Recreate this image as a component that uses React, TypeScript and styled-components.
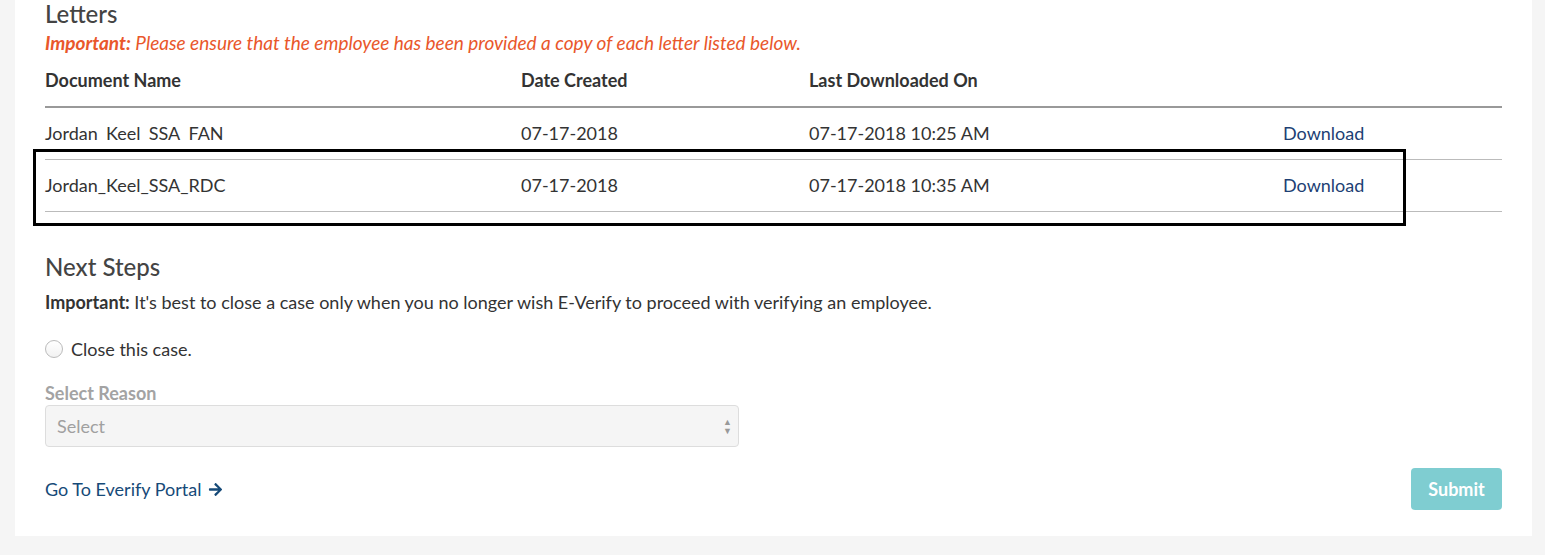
import React from "react";
import styled, { createGlobalStyle } from "styled-components";
import { FaArrowRight } from "react-icons/fa";

const GlobalStyle = createGlobalStyle`
  body {
    margin: 0;
    background-color: #f5f5f5;
    font-family: Lato, "Open Sans", sans-serif;
    color: #333;
  }
`;
const Card = styled.div`
  position: relative;
  margin: 0 13px 0 15px;
  padding: 0 30px 26px 30px;
  background-color: white;
`;
const Heading = styled.h2`
  margin: 0;
  font-size: 24px;
  font-weight: 500;
  line-height: 28px;
  color: #444;
`;
const Warning = styled.p`
  margin: 0;
  font-size: 19px;
  font-style: italic;
  line-height: 30px;
  color: #e9572b;
  b {
    font-weight: 700;
  }
`;
const Table = styled.div`
  display: flex;
  flex-direction: column;
`;
const Row = styled.div<{ head?: boolean }>`
  display: grid;
  grid-template-columns: 476px 288px 474px 1fr;
  align-items: center;
  box-sizing: border-box;
  height: ${(p) => (p.head ? "50px" : "52px")};
  padding-bottom: ${(p) => (p.head ? "4px" : "2px")};
  border-bottom: ${(p) => (p.head ? "2px solid #999" : "1px solid #bbb")};
  font-size: 18px;
  font-weight: ${(p) => (p.head ? 700 : 400)};
  color: #333;
`;
const DownloadLink = styled.a`
  color: #1d3f74;
  text-decoration: none;
  cursor: pointer;
`;
const Highlight = styled.div`
  position: absolute;
  left: 18px;
  top: 140px;
  width: 1373px;
  height: 86px;
  pointer-events: none;
  display: flex;
  flex-direction: column;
`;
const HighlightMask = styled.div`
  height: 9px;
  margin-left: 1px;
  background-color: white;
`;
const HighlightBox = styled.div`
  flex: 1;
  border: 3px solid black;
`;
const Section = styled.div`
  margin-top: 41px;
`;
const Note = styled.p`
  margin: 10px 0 0 0;
  font-size: 18px;
  line-height: 22px;
  color: #333;
  b {
    font-weight: 700;
  }
`;
const RadioRow = styled.label`
  display: flex;
  align-items: center;
  gap: 8px;
  margin-top: 25px;
  font-size: 18px;
  line-height: 22px;
  color: #333;
`;
const Radio = styled.span`
  width: 16px;
  height: 16px;
  border: 1px solid #bbb;
  border-radius: 50%;
  background: linear-gradient(#fff, #f2f2f2);
`;
const FieldLabel = styled.div`
  margin-top: 23px;
  font-size: 18px;
  font-weight: 700;
  line-height: 20px;
  color: #a3a3a3;
`;
const SelectBox = styled.div`
  margin-top: 2px;
  width: 694px;
  height: 42px;
  box-sizing: border-box;
  display: flex;
  align-items: center;
  justify-content: space-between;
  padding: 0 6px 0 11px;
  background-color: #f5f5f5;
  border: 1px solid #ddd;
  border-radius: 4px;
  font-size: 18px;
  color: #a0a0a0;
`;
const Spinner = styled.span`
  display: flex;
  flex-direction: column;
  gap: 2px;
  font-size: 9px;
  line-height: 7px;
  color: #999;
`;
const Footer = styled.div`
  margin-top: 21px;
  display: flex;
  justify-content: space-between;
  align-items: center;
`;
const PortalLink = styled.a`
  display: flex;
  align-items: center;
  gap: 7px;
  font-size: 18px;
  color: #164a78;
  text-decoration: none;
  cursor: pointer;
`;
const SubmitButton = styled.button`
  width: 91px;
  height: 42px;
  border: none;
  border-radius: 4px;
  background-color: #7fcdd1;
  color: white;
  font-family: Lato, sans-serif;
  font-size: 18px;
  font-weight: 700;
`;

const letters = [
  { name: "Jordan_Keel_SSA_FAN", created: "07-17-2018", downloaded: "07-17-2018 10:25 AM" },
  { name: "Jordan_Keel_SSA_RDC", created: "07-17-2018", downloaded: "07-17-2018 10:35 AM" },
];

const App = () => {
  return (
    <>
      <GlobalStyle />
      <Card>
        <Heading>Letters</Heading>
        <Warning>
          <b>Important:</b> Please ensure that the employee has been provided a copy of each letter listed below.
        </Warning>
        <Table>
          <Row head>
            <span>Document Name</span>
            <span>Date Created</span>
            <span>Last Downloaded On</span>
            <span />
          </Row>
          {letters.map((l) => (
            <Row key={l.name}>
              <span>{l.name}</span>
              <span>{l.created}</span>
              <span>{l.downloaded}</span>
              <DownloadLink>Download</DownloadLink>
            </Row>
          ))}
        </Table>
        <Section>
          <Heading>Next Steps</Heading>
          <Note>
            <b>Important:</b> It's best to close a case only when you no longer wish E-Verify to proceed with verifying an employee.
          </Note>
          <RadioRow>
            <Radio />
            Close this case.
          </RadioRow>
          <FieldLabel>Select Reason</FieldLabel>
          <SelectBox>
            <span>Select</span>
            <Spinner>
              <span>▲</span>
              <span>▼</span>
            </Spinner>
          </SelectBox>
          <Footer>
            <PortalLink>
              Go To Everify Portal <FaArrowRight size={15} />
            </PortalLink>
            <SubmitButton>Submit</SubmitButton>
          </Footer>
        </Section>
        <Highlight>
          <HighlightMask />
          <HighlightBox />
        </Highlight>
      </Card>
    </>
  );
};

export default App;
